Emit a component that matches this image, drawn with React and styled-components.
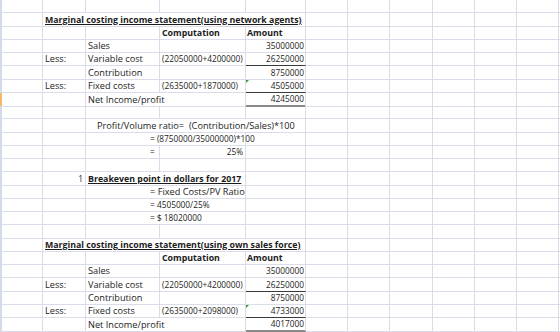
import styled, { createGlobalStyle, css } from "styled-components";

// column widths as seen on screen (A is partly scrolled off)
const COLS = [41, 43, 74, 86, 60, 42, 42, 43, 42, 42, 42, 42];

const GlobalStyle = createGlobalStyle`
  html, body {
    margin: 0;
    padding: 0;
    background: #fff;
    overflow: hidden;
  }
  body {
    font-family: "Open Sans", "Liberation Sans", sans-serif;
  }
`;

const Sheet = styled.div`
  display: flex;
  flex-direction: column;
  width: 560px;
  height: 332px;
  overflow: hidden;
`;

const Row = styled.div`
  display: grid;
  grid-template-columns: 2px ${COLS.map((w) => w + "px").join(" ")};
  height: 13.25px;
  flex: none;
`;

const RowEdge = styled.div`
  background: ${(p) => (p.$selected ? "#f5b869" : "#d3dbe8")};
`;

const Cell = styled.div`
  grid-column: span ${(p) => p.$span || 1};
  position: relative;
  box-sizing: border-box;
  border-right: 1px solid #dadcea;
  border-bottom: 1px solid #dadcea;
  display: flex;
  align-items: flex-end;
  justify-content: ${(p) => (p.$align === "right" ? "flex-end" : "flex-start")};
  padding: 0 ${(p) => p.$padR ?? 1}px 0 ${(p) => p.$padL ?? 2}px;
  font-size: ${(p) => (p.$num ? 8.3 : p.$bold ? 8.8 : 9.2)}px;
  line-height: 12px;
  color: #1c1c1c;
  white-space: pre;
  font-weight: ${(p) => (p.$bold ? 700 : 400)};
  text-decoration: ${(p) => (p.$underline ? "underline" : "none")};
  ${(p) =>
    p.$rule === "single" &&
    css`
      border-bottom-color: #3a3a3a;
    `}
  ${(p) =>
    p.$rule === "double" &&
    css`
      border-bottom: 2px solid #8a8a8a;
    `}
  ${(p) =>
    p.$flag &&
    css`
      &::before {
        content: "";
        position: absolute;
        top: 0;
        left: 0;
        border-top: 3px solid #2b9b3a;
        border-right: 3px solid transparent;
      }
    `}
`;

const statement = (title, fixedComp, fixed, net, selected) => [
  { cells: [{ col: 1, span: 4, text: title, bold: true, underline: true }] },
  {
    cells: [
      { col: 3, text: "Computation", bold: true },
      { col: 4, text: "Amount", bold: true, padL: 1 },
    ],
  },
  {
    cells: [
      { col: 2, text: "Sales" },
      { col: 4, text: "35000000", align: "right", num: true },
    ],
  },
  {
    cells: [
      { col: 1, text: "Less:" },
      { col: 2, text: "Variable cost" },
      { col: 3, text: "(22050000+4200000)", num: true },
      { col: 4, text: "26250000", align: "right", rule: "single", num: true },
    ],
  },
  {
    cells: [
      { col: 2, text: "Contribution" },
      { col: 4, text: "8750000", align: "right", num: true },
    ],
  },
  {
    cells: [
      { col: 1, text: "Less:" },
      { col: 2, text: "Fixed costs" },
      { col: 3, text: fixedComp, num: true },
      { col: 4, text: fixed, align: "right", rule: "single", flag: true, num: true },
    ],
  },
  {
    selected,
    cells: [
      { col: 2, span: 2, text: "Net Income/profit" },
      { col: 4, text: net, align: "right", rule: "double", num: true },
    ],
  },
];

const ROWS = [
  { cells: [] },
  ...statement(
    "Marginal costing income statement(using network agents)",
    "(2635000+1870000)",
    "4505000",
    "4245000",
    true
  ),
  { cells: [] },
  {
    cells: [
      { col: 2, span: 3, text: "Profit/Volume ratio=  (Contribution/Sales)*100", padL: 11 },
    ],
  },
  { cells: [{ col: 2, span: 2, text: "= (8750000/35000000)*100", padL: 64, num: true }] },
  {
    cells: [
      { col: 2, text: "=", padL: 64, num: true },
      { col: 3, text: "25%", align: "right", padR: 2, num: true },
    ],
  },
  { cells: [] },
  {
    cells: [
      { col: 1, text: "1", align: "right", padR: 2, num: true },
      { col: 2, span: 2, text: "Breakeven point in dollars for 2017", bold: true, underline: true },
    ],
  },
  { cells: [{ col: 2, span: 2, text: "= Fixed Costs/PV Ratio", padL: 64 }] },
  { cells: [{ col: 2, span: 2, text: "= 4505000/25%", padL: 64, num: true }] },
  { cells: [{ col: 2, span: 2, text: "= $ 18020000", padL: 64, num: true }] },
  { cells: [] },
  ...statement(
    "Marginal costing income statement(using own sales force)",
    "(2635000+2098000)",
    "4733000",
    "4017000",
    false
  ),
];

const renderCells = (specs) => {
  const out = [];
  let c = 0;
  while (c < COLS.length) {
    const s = specs.find((x) => x.col === c);
    if (s) {
      out.push(
        <Cell
          key={c}
          $span={s.span}
          $align={s.align}
          $bold={s.bold}
          $underline={s.underline}
          $rule={s.rule}
          $flag={s.flag}
          $padL={s.padL}
          $padR={s.padR}
          $num={s.num}
        >
          {s.text}
        </Cell>
      );
      c += s.span || 1;
    } else {
      out.push(<Cell key={c} />);
      c++;
    }
  }
  return out;
};

const App = () => {
  return (
    <>
      <GlobalStyle />
      <Sheet>
        {ROWS.map((row, i) => (
          <Row key={i}>
            <RowEdge $selected={row.selected} />
            {renderCells(row.cells)}
          </Row>
        ))}
      </Sheet>
    </>
  );
};

export default App;
